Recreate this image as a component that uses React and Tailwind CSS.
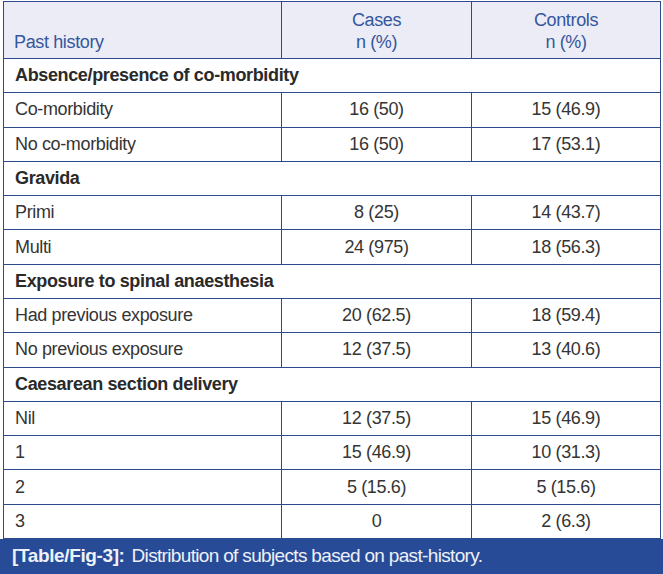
const groups = [
  {
    title: "Absence/presence of co-morbidity",
    rows: [
      ["Co-morbidity", "16 (50)", "15 (46.9)"],
      ["No co-morbidity", "16 (50)", "17 (53.1)"],
    ],
  },
  {
    title: "Gravida",
    rows: [
      ["Primi", "8 (25)", "14 (43.7)"],
      ["Multi", "24 (975)", "18 (56.3)"],
    ],
  },
  {
    title: "Exposure to spinal anaesthesia",
    rows: [
      ["Had previous exposure", "20 (62.5)", "18 (59.4)"],
      ["No previous exposure", "12 (37.5)", "13 (40.6)"],
    ],
  },
  {
    title: "Caesarean section delivery",
    rows: [
      ["Nil", "12 (37.5)", "15 (46.9)"],
      ["1", "15 (46.9)", "10 (31.3)"],
      ["2", "5 (15.6)", "5 (15.6)"],
      ["3", "0", "2 (6.3)"],
    ],
  },
];

const App = () => {
  return (
    <div
      className="w-[663px] h-[574px] bg-white overflow-hidden flex flex-col"
      style={{ fontFamily: '"Liberation Sans", Arial, sans-serif' }}
    >
      {/* Table */}
      <div className="mt-[1px] ml-[3px] w-[658px] h-[538px] bg-[#2c4a8c] p-px grid grid-cols-[277px_189px_1fr] grid-rows-[56px_repeat(14,1fr)] gap-px text-[18px] text-[#353535] tracking-[-0.02em]">
        {/* Header */}
        <div className="bg-[#ececf6] text-[#34579d] flex items-end pl-[10px] pb-[2px]">Past history</div>
        <div className="bg-[#ececf6] text-[#34579d] flex flex-col items-center justify-center leading-[22px] pt-[2px]">
          <span>Cases</span>
          <span>n (%)</span>
        </div>
        <div className="bg-[#ececf6] text-[#34579d] flex flex-col items-center justify-center leading-[22px] pt-[2px]">
          <span>Controls</span>
          <span>n (%)</span>
        </div>

        {groups.map((g) => (
          <>
            <div key={g.title} className="col-span-3 bg-white flex items-center pl-[11px] font-bold text-[#2a2a2a]">
              {g.title}
            </div>
            {g.rows.map((r) => (
              <>
                <div key={g.title + r[0]} className="bg-white flex items-center pl-[11px]">{r[0]}</div>
                <div className="bg-white flex items-center justify-center">{r[1]}</div>
                <div className="bg-white flex items-center justify-center">{r[2]}</div>
              </>
            ))}
          </>
        ))}
      </div>

      {/* Caption */}
      <div className="flex-1 bg-[#274b97] text-[#eef1f8] text-[19px] flex items-center pl-[12px]">
        <span className="font-bold mr-[7px] tracking-[-0.02em]">[Table/Fig-3]:</span>
        <span className="tracking-[-0.035em]">Distribution of subjects based on past-history.</span>
      </div>
    </div>
  );
};

export default App;
